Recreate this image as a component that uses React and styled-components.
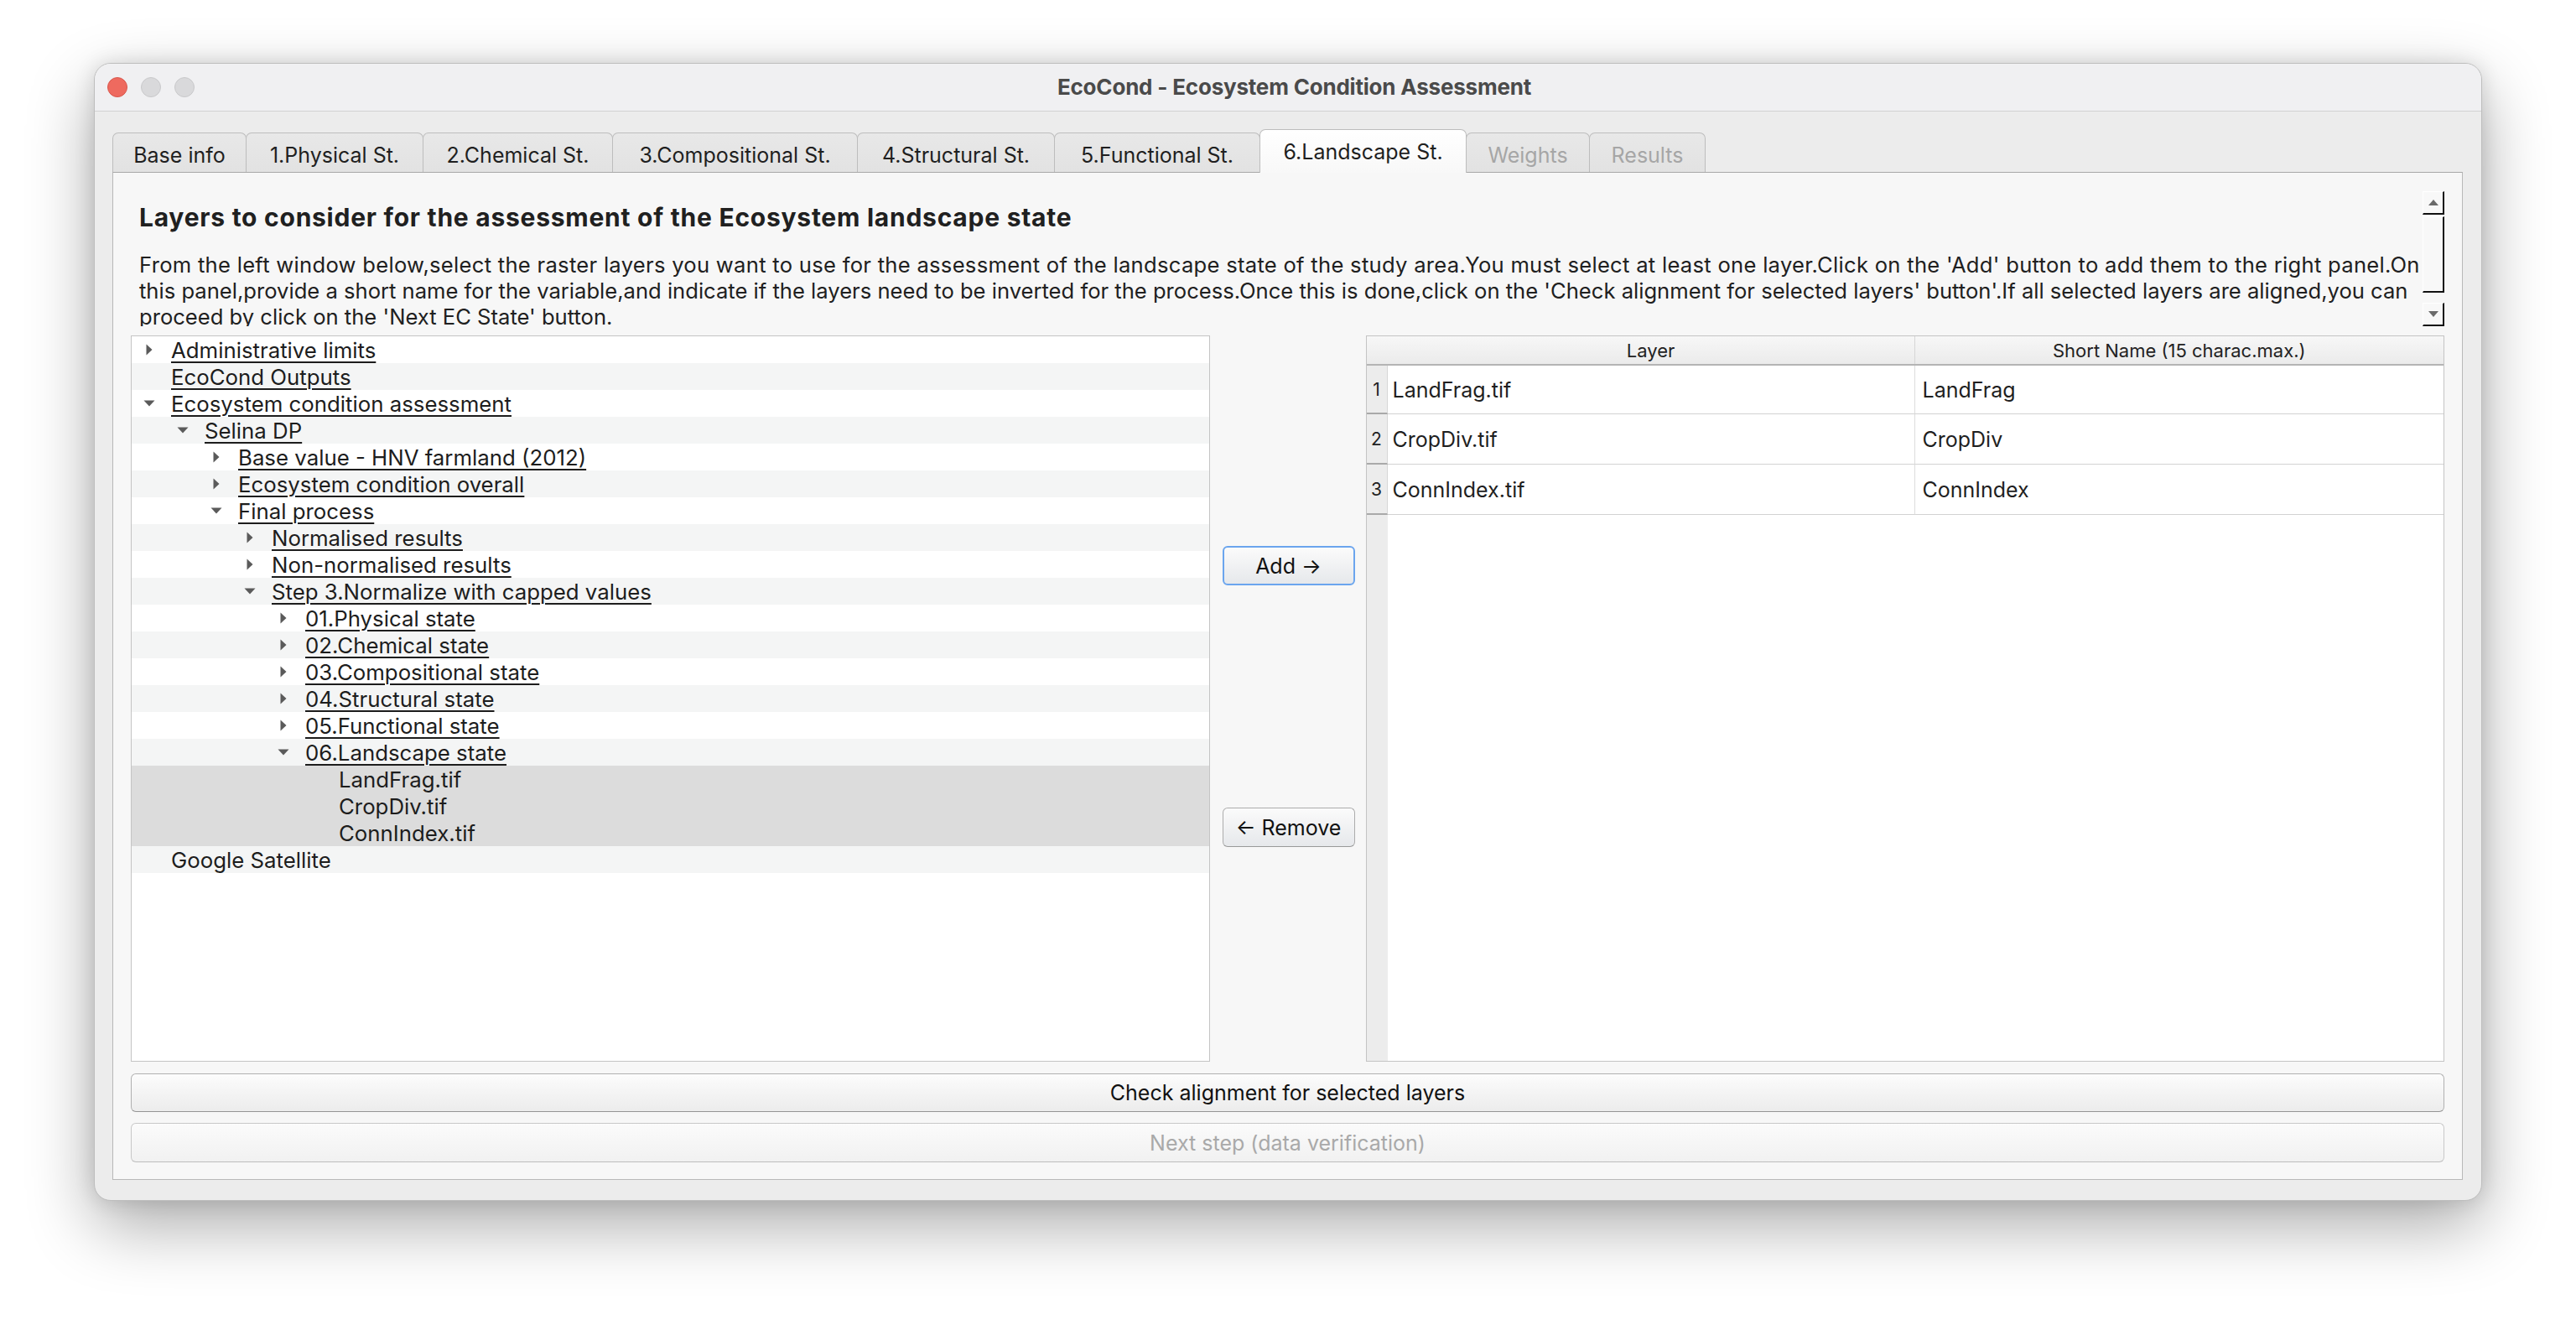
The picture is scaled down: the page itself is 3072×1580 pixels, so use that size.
import React from 'react';
import styled, { createGlobalStyle } from 'styled-components';

const GlobalStyle = createGlobalStyle`
    html, body {
        margin: 0;
        padding: 0;
        background: #ffffff;
    }
    body {
        font-family: Inter, "Liberation Sans", "Noto Sans", sans-serif;
        color: #1d1d1d;
    }
    * {
        box-sizing: border-box;
    }
`;

const Desktop = styled.div`
    width: 3072px;
    height: 1580px;
    padding: 75px 0 0 112px;
    background: #ffffff;
    overflow: hidden;
`;

const Window = styled.div`
    width: 2848px;
    height: 1357px;
    border-radius: 20px;
    border: 1px solid #bdbdbd;
    background: #ececec;
    box-shadow: 0 30px 80px rgba(0, 0, 0, 0.33), 0 0 24px rgba(0, 0, 0, 0.12);
    overflow: hidden;
    display: flex;
    flex-direction: column;
`;

const TitleBar = styled.div`
    height: 57px;
    flex: none;
    background: #f0f0f2;
    border-bottom: 1px solid #d2d2d2;
    display: grid;
    grid-template-columns: 1fr auto 1fr;
    align-items: center;
    padding-left: 15px;
`;

const Lights = styled.div`
    display: flex;
    gap: 16px;
`;

const Light = styled.span`
    width: 24px;
    height: 24px;
    border-radius: 50%;
    background: ${(p) => p.$color};
    border: 1px solid ${(p) => p.$edge};
`;

const Title = styled.div`
    font-size: 26px;
    font-weight: 700;
    color: #4a4a4a;
    letter-spacing: -0.2px;
    padding-bottom: 2px;
`;

const Body = styled.div`
    flex: 1;
    display: flex;
    flex-direction: column;
    padding: 21px 22px 24px 21px;
`;

const TabBar = styled.div`
    height: 51px;
    display: flex;
    align-items: flex-end;
    padding-left: 1px;
    position: relative;
    z-index: 2;
`;

const Tab = styled.div`
    width: ${(p) => p.$w}px;
    height: ${(p) => (p.$active ? 52 : 47)}px;
    margin-bottom: ${(p) => (p.$active ? -1 : 0)}px;
    margin-left: -1px;
    display: flex;
    align-items: center;
    justify-content: center;
    font-size: 25px;
    color: ${(p) => (p.$disabled ? '#a6a6a6' : '#1f1f1f')};
    background: ${(p) => (p.$active ? 'linear-gradient(#ffffff, #f8f8f8)' : 'linear-gradient(#e8e8e8, #e2e2e2)')};
    border: 1px solid #bdbdbd;
    border-bottom: none;
    border-radius: 7px 7px 0 0;
    white-space: nowrap;
    padding-top: ${(p) => (p.$active ? 1 : 5)}px;
`;

const Pane = styled.div`
    flex: 1;
    background: #f7f7f7;
    border: 1px solid #b8b8b8;
    border-top-color: #a8a8a8;
    padding: 20px 21px 19px 21px;
    display: flex;
    flex-direction: column;
    position: relative;
    z-index: 1;
`;

const InfoArea = styled.div`
    height: 163px;
    flex: none;
    display: flex;
    overflow: hidden;
`;

const InfoText = styled.div`
    flex: 1;
    padding: 15px 0 0 10px;
    overflow: hidden;
`;

const Heading = styled.div`
    font-size: 30px;
    font-weight: 700;
    line-height: 36px;
    letter-spacing: 0.75px;
    color: #202020;
    margin-bottom: 23px;
`;

const Paragraph = styled.div`
    font-size: 25.6px;
    line-height: 31px;
    color: #202020;
    white-space: nowrap;
`;

const Line = styled.span`
    display: block;
    letter-spacing: ${(p) => p.$track || 0}px;
`;

const ScrollBar = styled.div`
    width: 26px;
    flex: none;
    display: flex;
    flex-direction: column;
    padding-top: 2px;
`;

const ScrollBox = styled.div`
    height: ${(p) => p.$h}px;
    margin-top: ${(p) => p.$gap || 0}px;
    background: #f8f8f8;
    border-top: 1px solid #ffffff;
    border-left: 1px solid #ffffff;
    border-right: 2px solid #111111;
    border-bottom: 2px solid #111111;
    display: flex;
    align-items: center;
    justify-content: center;
`;

const MainRow = styled.div`
    height: 866px;
    flex: none;
    margin-top: 11px;
    display: grid;
    grid-template-columns: 1fr 186px 1fr;
`;

const Tree = styled.div`
    background: #ffffff;
    border: 1px solid #c4c4c4;
    overflow: hidden;
`;

const TreeRow = styled.div`
    height: 32px;
    display: flex;
    align-items: center;
    padding-left: ${(p) => p.$level * 40}px;
    background: ${(p) => (p.$selected ? '#dcdcdc' : p.$odd ? '#f4f5f5' : '#ffffff')};
`;

const ArrowSlot = styled.span`
    width: 42px;
    flex: none;
    display: flex;
    justify-content: center;
    align-items: center;
`;

const TreeLabel = styled.span`
    margin-left: 5px;
    font-size: 25.8px;
    color: #1d1d1d;
    white-space: nowrap;
    text-decoration: ${(p) => (p.$link ? 'underline' : 'none')};
    text-decoration-thickness: 2px;
    text-underline-offset: 4px;
`;

const Middle = styled.div`
    display: flex;
    flex-direction: column;
    padding-left: 15px;
    padding-right: 13px;
`;

const SideButton = styled.button`
    height: 47px;
    width: 158px;
    flex: none;
    margin-top: ${(p) => p.$top}px;
    font-family: inherit;
    font-size: 25px;
    color: #111111;
    background: linear-gradient(#fbfbfb, #e6e8eb);
    border: ${(p) => (p.$focus ? '2px solid #6ba5ee' : '1px solid #acacac')};
    border-bottom-color: ${(p) => (p.$focus ? '#6ba5ee' : '#999999')};
    border-radius: 6px;
    padding: 0;
`;

const Table = styled.div`
    background: #ffffff;
    border: 1px solid #c4c4c4;
    display: flex;
    flex-direction: column;
    overflow: hidden;
`;

const HeaderRow = styled.div`
    height: 35px;
    flex: none;
    display: grid;
    grid-template-columns: 25px 628px 1fr;
    background: linear-gradient(#f7f7f7, #ebebeb);
    border-bottom: 2px solid #b4b4b4;
`;

const HeaderCell = styled.div`
    display: flex;
    align-items: center;
    justify-content: center;
    font-size: 22px;
    color: #222222;
    border-left: ${(p) => (p.$divider ? '1px solid #d6d6d6' : 'none')};
`;

const TableBody = styled.div`
    flex: 1;
    display: grid;
    grid-template-columns: 25px 628px 1fr;
    grid-template-rows: 58px 60px 60px 1fr;
`;

const RowHead = styled.div`
    background: #ececec;
    border-bottom: 2px solid #a9a9a9;
    border-right: 1px solid #d6d6d6;
    display: flex;
    align-items: center;
    justify-content: center;
    font-size: 21px;
    color: #222222;
`;

const RowHeadFill = styled.div`
    background: #ececec;
`;

const Cell = styled.div`
    display: flex;
    align-items: center;
    padding-left: ${(p) => (p.$divider ? 9 : 6)}px;
    font-size: 25px;
    color: #1f1f1f;
    border-bottom: 1px solid #d2d2d2;
    border-left: ${(p) => (p.$divider ? '1px solid #dcdcdc' : 'none')};
`;

const Filler = styled.div`
    grid-column: 2 / 4;
`;

const WideButton = styled.button`
    height: ${(p) => p.$h}px;
    margin-top: ${(p) => p.$top}px;
    flex: none;
    width: 100%;
    font-family: inherit;
    font-size: 25px;
    color: ${(p) => (p.disabled ? '#a9a9a9' : '#111111')};
    background: ${(p) => (p.disabled ? 'linear-gradient(#fbfbfb, #f1f1f1)' : 'linear-gradient(#fcfcfc, #ececec)')};
    border: 1px solid ${(p) => (p.disabled ? '#c8c8c8' : '#b0b0b0')};
    border-bottom-color: ${(p) => (p.disabled ? '#bdbdbd' : '#959595')};
    border-radius: 6px;
    padding: 0;
`;

const tabs = [
    { label: 'Base info', w: 160 },
    { label: '1.Physical St.', w: 212 },
    { label: '2.Chemical St.', w: 227 },
    { label: '3.Compositional St.', w: 293 },
    { label: '4.Structural St.', w: 236 },
    { label: '5.Functional St.', w: 246 },
    { label: '6.Landscape St.', w: 247, active: true },
    { label: 'Weights', w: 148, disabled: true },
    { label: 'Results', w: 139, disabled: true },
];

const treeRows = [
    { label: 'Administrative limits', level: 0, arrow: 'right', link: true },
    { label: 'EcoCond Outputs', level: 0, link: true },
    { label: 'Ecosystem condition assessment', level: 0, arrow: 'down', link: true },
    { label: 'Selina DP', level: 1, arrow: 'down', link: true },
    { label: 'Base value - HNV farmland (2012)', level: 2, arrow: 'right', link: true },
    { label: 'Ecosystem condition overall', level: 2, arrow: 'right', link: true },
    { label: 'Final process', level: 2, arrow: 'down', link: true },
    { label: 'Normalised results', level: 3, arrow: 'right', link: true },
    { label: 'Non-normalised results', level: 3, arrow: 'right', link: true },
    { label: 'Step 3.Normalize with capped values', level: 3, arrow: 'down', link: true },
    { label: '01.Physical state', level: 4, arrow: 'right', link: true },
    { label: '02.Chemical state', level: 4, arrow: 'right', link: true },
    { label: '03.Compositional state', level: 4, arrow: 'right', link: true },
    { label: '04.Structural state', level: 4, arrow: 'right', link: true },
    { label: '05.Functional state', level: 4, arrow: 'right', link: true },
    { label: '06.Landscape state', level: 4, arrow: 'down', link: true },
    { label: 'LandFrag.tif', level: 5, selected: true },
    { label: 'CropDiv.tif', level: 5, selected: true },
    { label: 'ConnIndex.tif', level: 5, selected: true },
    { label: 'Google Satellite', level: 0 },
];

const layers = [
    { id: 1, file: 'LandFrag.tif', short: 'LandFrag' },
    { id: 2, file: 'CropDiv.tif', short: 'CropDiv' },
    { id: 3, file: 'ConnIndex.tif', short: 'ConnIndex' },
];

const infoLines = [
    { text: "From the left window below,select the raster layers you want to use for the assessment of the landscape state of the study area.You must select at least one layer.Click on the 'Add' button to add them to the right panel.On", track: 0.28 },
    { text: "this panel,provide a short name for the variable,and indicate if the layers need to be inverted for the process.Once this is done,click on the 'Check alignment for selected layers' button'.If all selected layers are aligned,you can", track: 0 },
    { text: "proceed by click on the 'Next EC State' button.", track: 0 },
];

function Arrow({ dir }) {
    if (dir === 'right') {
        return (
            <svg width="8" height="14" viewBox="0 0 8 14">
                <path d="M0.5 0.5 L7.5 7 L0.5 13.5 Z" fill="#5a5a5a" />
            </svg>
        );
    }
    if (dir === 'down') {
        return (
            <svg width="14" height="8" viewBox="0 0 14 8">
                <path d="M0.5 0.5 L13.5 0.5 L7 7.5 Z" fill="#5a5a5a" />
            </svg>
        );
    }
    return null;
}

function ScrollArrow({ up }) {
    return (
        <svg width="12" height="7" viewBox="0 0 12 7">
            <path d={up ? 'M0 7 L6 0 L12 7 Z' : 'M0 0 L12 0 L6 7 Z'} fill="#6a6a6a" />
        </svg>
    );
}

class App extends React.Component {
    renderTree() {
        return treeRows.map((row, i) => (
            <TreeRow key={i} $level={row.level} $odd={i % 2 === 1} $selected={row.selected}>
                <ArrowSlot>
                    <Arrow dir={row.arrow} />
                </ArrowSlot>
                <TreeLabel $link={row.link}>{row.label}</TreeLabel>
            </TreeRow>
        ));
    }

    renderTable() {
        return (
            <Table>
                <HeaderRow>
                    <HeaderCell />
                    <HeaderCell>Layer</HeaderCell>
                    <HeaderCell $divider>Short Name (15 charac.max.)</HeaderCell>
                </HeaderRow>
                <TableBody>
                    {layers.map((layer) => (
                        <React.Fragment key={layer.id}>
                            <RowHead>{layer.id}</RowHead>
                            <Cell>{layer.file}</Cell>
                            <Cell $divider>{layer.short}</Cell>
                        </React.Fragment>
                    ))}
                    <RowHeadFill />
                    <Filler />
                </TableBody>
            </Table>
        );
    }

    render() {
        return (
            <Desktop>
                <GlobalStyle />
                <Window>
                    <TitleBar>
                        <Lights>
                            <Light $color="#ee6a5f" $edge="#d8574d" />
                            <Light $color="#d9d9db" $edge="#c8c8ca" />
                            <Light $color="#d9d9db" $edge="#c8c8ca" />
                        </Lights>
                        <Title>EcoCond - Ecosystem Condition Assessment</Title>
                        <div />
                    </TitleBar>
                    <Body>
                        <TabBar>
                            {tabs.map((t) => (
                                <Tab key={t.label} $w={t.w} $active={t.active} $disabled={t.disabled}>
                                    {t.label}
                                </Tab>
                            ))}
                        </TabBar>
                        <Pane>
                            <InfoArea>
                                <InfoText>
                                    <Heading>Layers to consider for the assessment of the Ecosystem landscape state</Heading>
                                    <Paragraph>
                                        {infoLines.map((line, i) => (
                                            <Line key={i} $track={line.track}>{line.text}</Line>
                                        ))}
                                    </Paragraph>
                                </InfoText>
                                <ScrollBar>
                                    <ScrollBox $h={28}>
                                        <ScrollArrow up />
                                    </ScrollBox>
                                    <ScrollBox $h={92} $gap={2} />
                                    <ScrollBox $h={28} $gap={12}>
                                        <ScrollArrow />
                                    </ScrollBox>
                                </ScrollBar>
                            </InfoArea>
                            <MainRow>
                                <Tree>{this.renderTree()}</Tree>
                                <Middle>
                                    <SideButton $focus $top={251}>Add →</SideButton>
                                    <SideButton $top={265}>← Remove</SideButton>
                                </Middle>
                                {this.renderTable()}
                            </MainRow>
                            <WideButton $h={46} $top={14}>Check alignment for selected layers</WideButton>
                            <WideButton $h={47} $top={13} disabled>Next step (data verification)</WideButton>
                        </Pane>
                    </Body>
                </Window>
            </Desktop>
        );
    }
}

export default App;
